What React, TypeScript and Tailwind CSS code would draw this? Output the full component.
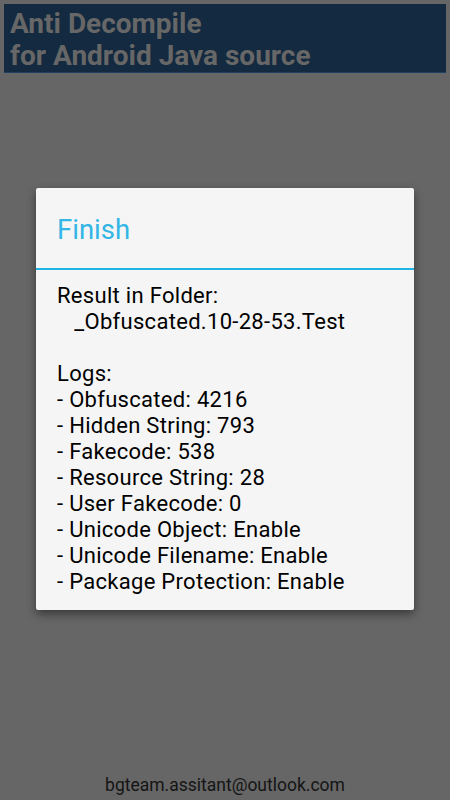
import React from "react";

const logs = [
  "- Obfuscated: 4216",
  "- Hidden String: 793",
  "- Fakecode: 538",
  "- Resource String: 28",
  "- User Fakecode: 0",
  "- Unicode Object: Enable",
  "- Unicode Filename: Enable",
  "- Package Protection: Enable",
];

export default function App() {
  return (
    <div
      className="relative flex h-[800px] w-full flex-col bg-[#666666]"
      style={{ fontFamily: "Roboto, 'Liberation Sans', sans-serif" }}
    >
      {/* App header (dimmed behind dialog) */}
      <div className="mx-[4px] mt-[4px] h-[69px] border-b border-[#1d3f63] bg-[#142a40] pl-[6px] pt-[4px]">
        <p className="text-[28px] font-bold leading-[32px] text-[#676767]">Anti Decompile</p>
        <p className="text-[28px] font-bold leading-[32px] text-[#676767]">for Android Java source</p>
      </div>

      <div className="flex-1" />

      {/* Footer */}
      <p className="pb-[3px] text-center text-[17.5px] leading-[24px] text-[#141414]">
        bgteam.assitant@outlook.com
      </p>

      {/* Dialog */}
      <div className="absolute inset-0 flex items-center justify-center">
        <div className="mt-[-2px] w-[378px] rounded-[2px] bg-[#f5f5f5] shadow-[0_4px_10px_rgba(0,0,0,0.45)]">
          <div className="flex h-[80px] items-center pl-[21px] pt-[3px]">
            <h2 className="text-[27.5px] leading-[30px] text-[#33b5e5]">Finish</h2>
          </div>
          <div className="h-[2px] bg-[#1fb4e6]" />
          <div className="whitespace-pre px-[21px] pb-[15px] pt-[13px] text-[22px] leading-[26px] tracking-[0.3px] text-black">
            <p>Result in Folder:</p>
            <p>{"   _Obfuscated.10-28-53.Test"}</p>
            <p>&nbsp;</p>
            <p>Logs:</p>
            {logs.map((l) => (
              <p key={l}>{l}</p>
            ))}
          </div>
        </div>
      </div>
    </div>
  );
}
